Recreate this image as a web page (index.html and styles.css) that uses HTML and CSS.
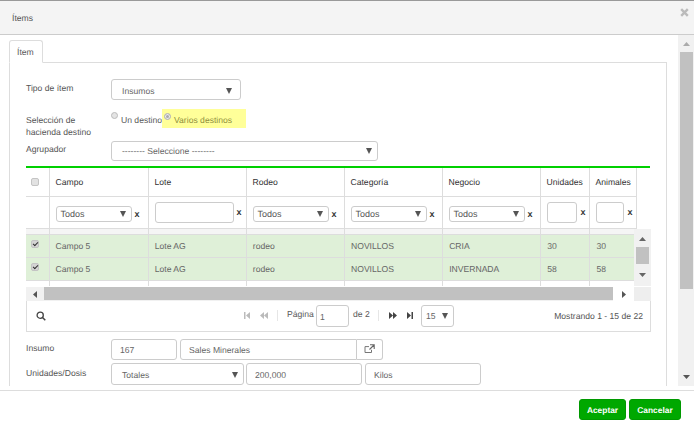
FILE: index.html
```html
<!DOCTYPE html>
<html lang="es">
<head>
<meta charset="utf-8">
<title>Ítems</title>
<link rel="stylesheet" href="styles.css">
</head>
<body>
<div class="modal">
  <header class="modal-head">
    <span class="modal-title">Ítems</span>
    <svg class="close" width="9" height="9" viewBox="0 0 9 9"><path d="M1.2 1.2l6.6 6.6M7.8 1.2L1.2 7.8" stroke="#bbb" stroke-width="2.4"/></svg>
  </header>
  <div class="modal-body">
    <div class="main">
      <div class="tabs"><div class="tab">Ítem</div></div>
      <div class="pane">
        <div class="row row-tipo">
          <label class="lbl">Tipo de ítem</label>
          <div class="sel w-tipo"><span>Insumos</span><i class="caret"></i></div>
        </div>
        <div class="row row-radio">
          <label class="lbl lbl-two">Selección de<br>hacienda destino</label>
          <div class="radios">
            <label class="radio-a"><input type="radio" name="dest" class="rd"><span>Un destino</span></label>
            <label class="radio-b"><input type="radio" name="dest" class="rd" checked><span>Varios destinos</span></label>
          </div>
        </div>
        <div class="row row-agr">
          <label class="lbl">Agrupador</label>
          <div class="sel w-agr"><span>-------- Seleccione --------</span><i class="caret"></i></div>
        </div>
        <div class="grid">
          <table class="tbl tbl-head">
            <colgroup><col class="c0"><col class="c1"><col class="c2"><col class="c3"><col class="c4"><col class="c5"><col class="c6"><col class="c7"><col class="c8"></colgroup>
            <tr class="tr-title">
              <th class="cc"><input type="checkbox" class="cb"></th>
              <th>Campo</th><th>Lote</th><th>Rodeo</th><th>Categoría</th><th>Negocio</th><th class="th-n">Unidades</th><th class="th-n">Animales</th><th class="blank"></th>
            </tr>
            <tr class="tr-filter">
              <td></td>
              <td><div class="flt"><div class="sel sel-f"><span>Todos</span><i class="caret"></i></div><b>x</b></div></td>
              <td><div class="flt flt-t"><input class="inp inp-lote" type="text"><b>x</b></div></td>
              <td><div class="flt"><div class="sel sel-f"><span>Todos</span><i class="caret"></i></div><b>x</b></div></td>
              <td><div class="flt"><div class="sel sel-f"><span>Todos</span><i class="caret"></i></div><b>x</b></div></td>
              <td><div class="flt"><div class="sel sel-f"><span>Todos</span><i class="caret"></i></div><b>x</b></div></td>
              <td><div class="flt flt-t flt-n"><input class="inp inp-u" type="text"><b>x</b></div></td>
              <td><div class="flt flt-t flt-n"><input class="inp inp-a" type="text"><b>x</b></div></td>
              <td class="blank"></td>
            </tr>
          </table>
          <div class="scroll-area">
            <table class="tbl tbl-body">
              <colgroup><col class="c0"><col class="c1"><col class="c2"><col class="c3"><col class="c4"><col class="c5"><col class="c6"><col class="c7b"></colgroup>
              <tr class="tr-spacer"><td></td><td></td><td></td><td></td><td></td><td></td><td></td><td></td></tr>
              <tr class="tr-sel">
                <td class="cc"><input type="checkbox" class="cb" checked></td>
                <td>Campo 5</td><td>Lote AG</td><td>rodeo</td><td>NOVILLOS</td><td>CRIA</td><td>30</td><td>30</td>
              </tr>
              <tr class="tr-sel">
                <td class="cc"><input type="checkbox" class="cb" checked></td>
                <td>Campo 5</td><td>Lote AG</td><td>rodeo</td><td>NOVILLOS</td><td>INVERNADA</td><td>58</td><td>58</td>
              </tr>
              <tr class="tr-next"><td></td><td></td><td></td><td></td><td></td><td></td><td></td><td></td></tr>
            </table>
            <div class="vbar">
              <svg width="7" height="4" viewBox="0 0 7 4"><path d="M3.5 0L7 4H0z" fill="#666"/></svg>
              <div class="vbar-thumb"></div>
              <svg width="7" height="4" viewBox="0 0 7 4"><path d="M0 0h7L3.5 4z" fill="#666"/></svg>
            </div>
          </div>
          <div class="hbar">
            <div class="hbtn"><svg width="4" height="7" viewBox="0 0 4 7"><path d="M4 0v7L0 3.5z" fill="#555"/></svg></div>
            <div class="hbar-thumb"></div>
            <div class="hbtn hbtn-r"><svg width="4" height="7" viewBox="0 0 4 7"><path d="M0 0v7l4-3.5z" fill="#555"/></svg></div>
            <div class="hbar-corner"></div>
          </div>
          <div class="pager">
            <svg class="search" width="10" height="10" viewBox="0 0 10 10"><circle cx="4.2" cy="4.2" r="3.1" fill="none" stroke="#444" stroke-width="1.3"/><path d="M6.5 6.5L9.3 9.3" stroke="#444" stroke-width="1.5"/></svg>
            <div class="pg-center">
              <svg class="pg-first" width="6" height="7" viewBox="0 0 6 7"><path d="M0 0h1.5v7H0zM6 0v7L2 3.5z" fill="#bbb"/></svg>
              <svg class="pg-prev" width="8" height="7" viewBox="0 0 8 7"><path d="M4 0v7L0 3.5zM8 0v7L4 3.5z" fill="#bbb"/></svg>
              <i class="pg-sep"></i>
              <span class="pg-lbl">Página</span>
              <input class="inp pg-inp" type="text" value="1">
              <span class="pg-de">de 2</span>
              <i class="pg-sep pg-sep2"></i>
              <svg class="pg-next" width="8" height="7" viewBox="0 0 8 7"><path d="M0 0v7l4-3.5zM4 0v7l4-3.5z" fill="#444"/></svg>
              <svg class="pg-last" width="6" height="7" viewBox="0 0 6 7"><path d="M0 0v7l4-3.5zM4.5 0H6v7H4.5z" fill="#444"/></svg>
              <div class="sel sel-pg"><span>15</span><i class="caret"></i></div>
            </div>
            <span class="pg-info">Mostrando 1 - 15 de 22</span>
          </div>
        </div>
        <div class="row row-ins">
          <label class="lbl">Insumo</label>
          <input class="inp f-code" type="text" value="167">
          <div class="group">
            <input class="inp f-name" type="text" value="Sales Minerales">
            <span class="addon"><svg width="11" height="10" viewBox="0 0 11 10"><path d="M7.5 5.8v2.7H1V2.6h4" fill="none" stroke="#777"/><path d="M6 .8h4.2V5M10 1L5.5 5.5" fill="none" stroke="#666" stroke-width="1.1"/></svg></span>
          </div>
        </div>
        <div class="row row-uni">
          <label class="lbl">Unidades/Dosis</label>
          <div class="sel w-uni"><span>Totales</span><i class="caret"></i></div>
          <input class="inp f-val" type="text" value="200,000">
          <input class="inp f-kg" type="text" value="Kilos">
        </div>
      </div>
    </div>
    <div class="vscroll">
      <svg width="7" height="4" viewBox="0 0 7 4"><path d="M3.5 0L7 4H0z" fill="#aaa"/></svg>
      <div class="vscroll-thumb"></div>
      <svg width="7" height="4" viewBox="0 0 7 4"><path d="M0 0h7L3.5 4z" fill="#555"/></svg>
    </div>
  </div>
  <footer class="modal-foot">
    <button class="btn btn-ok" type="button">Aceptar</button>
    <button class="btn btn-no" type="button">Cancelar</button>
  </footer>
</div>
</body>
</html>
```
FILE: styles.css
```css
* { box-sizing: border-box; }
html, body { margin: 0; height: 100%; overflow: hidden; background: #fff; }
body { font: 8.6px/12px "Liberation Sans", Arial, sans-serif; color: #5a5a5a; text-rendering: geometricPrecision; }
input, button { text-rendering: geometricPrecision; }
.modal { height: 423px; display: flex; flex-direction: column; border-top: 1px solid #999; }

.modal-head { height: 34px; flex: none; background: #f4f4f4; border-bottom: 1px solid #ccc; display: flex; justify-content: space-between; padding: 11px 5px 0 12px; }
.modal-title { color: #555; }
.close { margin-top: -4px; }

.modal-body { height: 351px; flex: none; display: flex; overflow: hidden; }
.main { width: 678px; flex: none; padding: 5px 11px 0 9px; }
.tabs { height: 23px; display: flex; }
.tab { width: 34px; height: 23px; border: 1px solid #ddd; border-bottom: 1px solid #fff; border-radius: 3px 3px 0 0; padding: 5px 0 0 7px; background: #fff; position: relative; z-index: 1; }
.pane { border: 1px solid #ddd; margin-top: -1px; height: 340px; padding: 16px 15px 0 16px; }

.row { display: flex; align-items: flex-start; }
.lbl { width: 85px; flex: none; color: #555; }
.lbl-two { line-height: 12px; }

.sel { display: flex; align-items: center; justify-content: space-between; border: 1px solid #ccc; border-radius: 3px; background: #fff; color: #666; }
.caret { width: 0; height: 0; border-left: 3.5px solid transparent; border-right: 3.5px solid transparent; border-top: 6px solid #555; flex: none; }
.inp { display: block; font: inherit; color: #666; border: 1px solid #ccc; border-radius: 3px; background: #fff; padding: 2px 8px 0; outline: 0; margin: 0; }

.cb { appearance: none; -webkit-appearance: none; display: block; width: 8px; height: 8px; margin: 0 0 0 5px; background: #e2e2e2; border: 1px solid #c4c4c4; border-radius: 2px; position: relative; }
.cb:checked { background: #d4d4d4; }
.cb:checked::after { content: ""; display: block; width: 4px; height: 2px; margin: 1px 0 0 1px; border-left: 1px solid #333; border-bottom: 1px solid #333; transform: rotate(-45deg); }
.tbl-body .cb { margin-top: -4px; }

.row-tipo .lbl { padding-top: 3px; }
.w-tipo { width: 130px; height: 21px; padding: 2px 8px 0 10px; }
.row-radio { margin-top: 9px; height: 32px; }
.row-radio .lbl { padding-top: 5px; }
.radios { display: flex; align-items: flex-start; margin-left: 0; }
.rd { appearance: none; -webkit-appearance: none; width: 7px; height: 7px; border: 1px solid #bbb; border-radius: 50%; background: #e4e4e4; margin: 0; flex: none; }
.rd:checked { background: #aaa; box-shadow: inset 0 0 0 1px #eee; }
.radio-a { display: flex; align-items: flex-start; width: 51px; padding-left: 0; }
.radio-a .rd { margin-top: 3px; }
.radio-a span { margin: 5px 0 0 3px; white-space: nowrap; }
.radio-b { display: flex; align-items: flex-start; width: 84px; height: 19px; background: #ffff99; color: #8f8f40; padding: 4px 0 0 2px; margin-left: 0; }
.radio-b span { margin: 1px 0 0 3px; white-space: nowrap; }
.row-agr { margin-top: 0; }
.row-agr .lbl { padding-top: 2px; }
.w-agr { width: 267px; height: 20px; padding: 0 5px 0 10px; }

.grid { margin: 5px 0 0 0; width: 625px; border-top: 0; }
.tbl { border-collapse: collapse; table-layout: fixed; }
.tbl-head { width: 624px; border-top: 2px solid #00d000; }
.c0 { width: 23px; } .c1 { width: 99px; } .c2 { width: 98px; } .c3 { width: 98px; } .c4 { width: 98px; } .c5 { width: 98px; } .c6 { width: 49px; } .c7 { width: 47px; } .c8 { width: 14px; }
.c7b { width: 44px; }
.tbl td, .tbl th { border: 1px solid #ddd; padding: 0 0 0 6px; font-weight: 400; text-align: left; vertical-align: middle; white-space: nowrap; overflow: hidden; }
.tbl td:first-child, .tbl th:first-child { border-left: 0; }
.tbl .cc { padding: 0; text-align: center; }
.tbl-head .blank { border: 0; padding: 0; }
.tr-title th { height: 29px; color: #333; border-top: 0; }
.tr-title .th-n { padding-left: 6px; }
.tr-filter td { height: 32px; padding: 0 0 0 6px; border-bottom: 1px solid #ddd; }
.flt { display: flex; align-items: center; gap: 3px; margin-top: 3px; }
.flt b { font-size: 9px; color: #333; font-weight: 700; }
.sel-f { width: 76px; height: 16px; padding: 0 5px 0 4px; color: #555; font-size: 9px; }
.flt-t { align-items: flex-start; margin-top: 0; }
.flt-t b { margin-top: 4px; }
.inp-lote { width: 79px; height: 21px; }
.flt-n { gap: 4px; }
.inp-u { width: 30px; height: 21px; }
.inp-a { width: 28px; height: 21px; }

.scroll-area { display: flex; height: 57px; overflow: hidden; width: 625px; }
.tbl-body { width: 608px; flex: none; align-self: flex-start; }
.tr-spacer td { height: 6px; background: #f5f5f5; border-top: 0; }
.tr-sel td { height: 23px; background: #dff0d8; color: #666; }
.tr-next td { height: 5px; border-bottom: 0; }
.tbl-body td:last-child { border-right: 0; }
.vbar { width: 17px; flex: none; background: #f1f1f1; display: flex; flex-direction: column; align-items: center; }
.vbar svg { margin-top: 8px; }
.vbar-thumb { width: 13px; height: 17px; background: #c1c1c1; margin-top: 6px; }
.vbar svg:last-child { margin-top: 9px; }

.hbar { display: flex; height: 15px; margin-top: 1px; align-items: stretch; background: #f1f1f1; }
.hbtn { width: 18px; flex: none; display: flex; align-items: center; justify-content: center; }
.hbtn-r { width: 21px; background: #fff; }
.hbar-thumb { width: 569px; background: #c1c1c1; height: 13px; }
.hbar-corner { width: 17px; flex: none; background: #eee; }

.pager { height: 31px; border: 1px solid #ddd; border-top: 0; margin-top: -1px; display: flex; align-items: center; padding: 0 7px 0 9px; position: relative; background: #fff; }
.pg-center { display: flex; align-items: center; margin-left: 198px; }
.pg-first { margin-right: 10px; }
.pg-prev { margin-right: 9px; }
.pg-sep { width: 1px; height: 11px; background: #e6e6e6; }
.pg-lbl { margin: -4px 2px 0 9px; width: 27px; white-space: nowrap; }
.pg-inp { width: 33px; height: 22px; padding: 2px 0 0 3px; }
.pg-de { margin: -4px 0 0 4px; width: 17px; white-space: nowrap; }
.pg-sep2 { margin-left: 8px; }
.pg-next { margin-left: 10px; }
.pg-last { margin-left: 10px; }
.sel-pg { width: 33px; height: 22px; margin-left: 8px; padding: 0 5px 0 4px; }
.pg-info { margin-left: auto; color: #555; }

.row-ins { margin-top: 7px; }
.row-ins .lbl { padding-top: 3px; }
.f-code { width: 66px; height: 21px; }
.group { display: flex; margin-left: 3px; }
.f-name { width: 177px; height: 21px; border-radius: 3px 0 0 3px; }
.addon { width: 26px; height: 21px; border: 1px solid #ccc; border-left: 0; border-radius: 0 3px 3px 0; display: flex; align-items: center; justify-content: center; }
.row-uni { margin-top: 3px; }
.row-uni .lbl { padding-top: 4px; }
.w-uni { width: 133px; height: 22px; padding: 2px 5px 0 10px; }
.f-val { width: 116px; height: 22px; margin-left: 2px; }
.f-kg { width: 116px; height: 22px; margin-left: 3px; }

.vscroll { width: 16px; flex: none; background: #f1f1f1; display: flex; flex-direction: column; align-items: center; padding-top: 7px; }
.vscroll-thumb { width: 13px; height: 237px; background: #c1c1c1; margin-top: 6px; }
.vscroll svg:last-child { margin-top: 86px; }

.modal-foot { flex: 1; margin-top: 4px; border-top: 1px solid #ddd; display: flex; justify-content: flex-end; gap: 3px; padding: 8px 13px 0 0; }
.btn { height: 21px; border: 1px solid #090; border-radius: 3px; background: #00a800; color: #fff; font: 700 8.4px/12px "Liberation Sans", Arial, sans-serif; padding: 0; }
.btn-ok { width: 47px; }
.btn-no { width: 52px; }
```
